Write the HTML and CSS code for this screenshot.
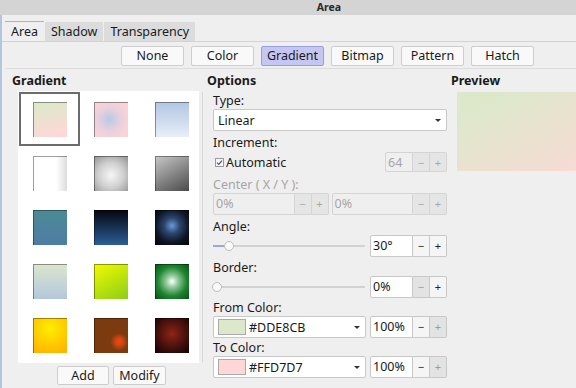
FILE: index.html
```html
<!DOCTYPE html>
<html lang="en">
<head>
  <meta charset="UTF-8">
  <meta name="viewport" content="width=device-width, initial-scale=1.0">
  <title>Area</title>
  <link rel="stylesheet" href="styles.css">
</head>
<body>
  <div class="titlebar">Area</div>

  <div class="window">
    <!-- Tabs -->
    <div class="tabs">
      <span class="tab active">Area</span>
      <span class="tab">Shadow</span>
      <span class="tab">Transparency</span>
    </div>

    <!-- Fill type buttons -->
    <div class="fill-types">
      <button class="btn">None</button>
      <button class="btn">Color</button>
      <button class="btn selected">Gradient</button>
      <button class="btn">Bitmap</button>
      <button class="btn">Pattern</button>
      <button class="btn">Hatch</button>
    </div>

    <div class="content">
      <!-- Gradient gallery -->
      <div class="gradient-col">
        <h3>Gradient</h3>
        <div class="gallery">
          <div class="cell selected"><div class="swatch g-pastel"></div></div>
          <div class="cell"><div class="swatch g-dream"></div></div>
          <div class="cell"><div class="swatch g-sky"></div></div>
          <div class="cell"><div class="swatch g-white"></div></div>
          <div class="cell"><div class="swatch g-silver"></div></div>
          <div class="cell"><div class="swatch g-gray"></div></div>
          <div class="cell"><div class="swatch g-teal"></div></div>
          <div class="cell"><div class="swatch g-midnight"></div></div>
          <div class="cell"><div class="swatch g-deepsea"></div></div>
          <div class="cell"><div class="swatch g-mist"></div></div>
          <div class="cell"><div class="swatch g-lime"></div></div>
          <div class="cell"><div class="swatch g-green"></div></div>
          <div class="cell"><div class="swatch g-sun"></div></div>
          <div class="cell"><div class="swatch g-brown"></div></div>
          <div class="cell"><div class="swatch g-wine"></div></div>
        </div>
        <div class="gallery-actions">
          <button class="btn small">Add</button>
          <button class="btn small">Modify</button>
        </div>
      </div>

      <!-- Options -->
      <div class="options-col">
        <h3>Options</h3>
        <div class="options">
          <label class="first">Type:</label>
          <div class="select">
            <span>Linear</span>
            <span class="arrow"></span>
          </div>

          <label>Increment:</label>
          <div class="row spread">
            <span class="check">
              <svg width="9" height="9" viewBox="0 0 9 9">
                <rect x="0.5" y="0.5" width="8" height="8" fill="#f6f6f6" stroke="#9a9a9a"/>
                <path d="M2 4.6 L3.8 6.4 L7 2.6" fill="none" stroke="#4b5873" stroke-width="1.2"/>
              </svg>
              Automatic
            </span>
            <div class="spin disabled inc">
              <span class="spin-field">64</span>
              <span class="spin-btn">−</span>
              <span class="spin-btn">+</span>
            </div>
          </div>

          <label class="muted">Center ( X / Y ):</label>
          <div class="row pair">
            <div class="spin disabled">
              <span class="spin-field">0%</span>
              <span class="spin-btn">−</span>
              <span class="spin-btn">+</span>
            </div>
            <div class="spin disabled">
              <span class="spin-field">0%</span>
              <span class="spin-btn">−</span>
              <span class="spin-btn">+</span>
            </div>
          </div>

          <label>Angle:</label>
          <div class="row">
            <div class="slider">
              <div class="slider-track"></div>
              <div class="slider-fill"></div>
              <div class="slider-handle angle"></div>
            </div>
            <div class="spin fixed">
              <span class="spin-field">30°</span>
              <span class="spin-btn">−</span>
              <span class="spin-btn">+</span>
            </div>
          </div>

          <label class="tight">Border:</label>
          <div class="row">
            <div class="slider">
              <div class="slider-track"></div>
              <div class="slider-handle"></div>
            </div>
            <div class="spin fixed">
              <span class="spin-field">0%</span>
              <span class="spin-btn off">−</span>
              <span class="spin-btn">+</span>
            </div>
          </div>

          <label class="tighter">From Color:</label>
          <div class="row">
            <div class="select color">
              <span class="color-name"><span class="chip from"></span>#DDE8CB</span>
              <span class="arrow"></span>
            </div>
            <div class="spin fixed">
              <span class="spin-field">100%</span>
              <span class="spin-btn">−</span>
              <span class="spin-btn off">+</span>
            </div>
          </div>

          <label class="tighter">To Color:</label>
          <div class="row">
            <div class="select color">
              <span class="color-name"><span class="chip to"></span>#FFD7D7</span>
              <span class="arrow"></span>
            </div>
            <div class="spin fixed">
              <span class="spin-field">100%</span>
              <span class="spin-btn">−</span>
              <span class="spin-btn off">+</span>
            </div>
          </div>
        </div>
      </div>

      <!-- Preview -->
      <div class="preview-col">
        <h3>Preview</h3>
        <div class="preview"></div>
      </div>
    </div>
  </div>
</body>
</html>
```

FILE: styles.css
```css
:root {
  --panel-bg: #efefef;
  --text: #1a1a1a;
  --muted: #a6a6a6;
  --field-border: #c8c8c8;
  --line: #d8d8d8;
}

* {
  box-sizing: border-box;
}

body {
  margin: 0;
  width: 576px;
  height: 388px;
  overflow: hidden;
  background-color: var(--panel-bg);
  color: var(--text);
  font-family: "Noto Sans", sans-serif;
  font-size: 12.5px;
}

.titlebar {
  height: 15px;
  line-height: 15px;
  padding-left: 82px;
  background-color: #d4d4d4;
  color: #2a2a2a;
  font-size: 10.5px;
  font-weight: bold;
  text-align: center;
}

.window {
  height: 373px;
  padding-top: 6px;
  border-left: 2px solid #b3c6de;
}

/* Tabs */
.tabs {
  display: flex;
  align-items: flex-end;
  gap: 1px;
  height: 21px;
  padding-left: 3px;
  border-bottom: 1px solid #d2d2d2;
}

.tab {
  height: 19px;
  line-height: 19px;
  padding: 0 6px;
  background-color: #dcdcdc;
}

.tab.active {
  height: 20px;
  background-color: var(--panel-bg);
  border-top: 1px solid #ababdf;
}

/* Buttons */
.btn {
  width: 63px;
  height: 20px;
  padding: 0;
  font: inherit;
  line-height: 18px;
  color: var(--text);
  background-color: #f9f9f9;
  border: 1px solid #cdcdcd;
  border-radius: 2px;
}

.btn.selected {
  background-color: #c6c6f2;
  border-color: #9c9ce0;
}

.btn.small {
  width: 52px;
  height: 19px;
  line-height: 17px;
}

.btn.small + .btn.small {
  width: 53px;
}

.fill-types {
  display: flex;
  gap: 7px;
  padding-left: 119px;
  margin-top: 4px;
}

/* Layout */
.content {
  display: flex;
  margin: 2px 0 0 3px;
  border-top: 1px solid #dcdcdc;
}

h3 {
  margin: 4px 0 0;
  font-size: 12.5px;
  line-height: 16px;
  font-weight: bold;
}

.gradient-col {
  flex: 0 0 197px;
}

.gradient-col h3 {
  padding-left: 7px;
}

.gallery {
  display: grid;
  grid-template-columns: repeat(3, 61px);
  grid-auto-rows: 54px;
  width: 181px;
  height: 272px;
  margin: 2px 0 0 13px;
  padding: 1px 0 0 1px;
  overflow: hidden;
  background-color: #fff;
}

.cell {
  padding-top: 10px;
}

.cell.selected {
  box-shadow: inset 0 0 0 2px #6c6c6c;
}

.swatch {
  width: 34px;
  height: 35px;
  margin: 0 auto;
  box-shadow: inset 1px 1px 0 rgba(0, 0, 0, 0.38);
}

.g-pastel { background: linear-gradient(165deg, #dde8cb 10%, #ffd7d7 95%); }
.g-dream { background: radial-gradient(circle at 45% 50%, #b9c9e6 0, #e8d0dc 45%, #f8d3d8 75%); }
.g-sky { background: linear-gradient(180deg, #b2c6e3, #e7eef6); }
.g-white { background: linear-gradient(90deg, #fff 68%, #dcdcdc); }
.g-silver { background: radial-gradient(circle at 50% 55%, #f6f6f6 0, #cfcfcf 50%, #9c9c9c 90%); }
.g-gray { background: linear-gradient(150deg, #c8c8c8, #4a4a4a); }
.g-teal { background: linear-gradient(180deg, #4b8b94, #4f7ca6); }
.g-midnight { background: linear-gradient(180deg, #04070f, #2b5e97); }
.g-deepsea { background: radial-gradient(circle at 50% 45%, #6b9ad6 0, #2c4670 30%, #0f1624 65%, #05070a 95%); }
.g-mist { background: linear-gradient(180deg, #dce6cd, #b3c7dc); }
.g-lime { background: linear-gradient(150deg, #f2fb00, #8ccd17); }
.g-green { background: radial-gradient(circle at 50% 50%, #ffffff 0, #8fc99a 25%, #1f8530 60%, #0d5e1c 90%); }
.g-sun { background: radial-gradient(circle at 50% 30%, #ffee00 0, #ffd000 45%, #ffb400 90%); }
.g-brown { background: radial-gradient(circle at 74% 68%, #ff3c10 0, #d84812 3px, #7c3a0f 9px); }
.g-wine { background: radial-gradient(circle at 50% 45%, #8e2418 0, #5a160e 40%, #200606 85%); }

.gallery-actions {
  display: flex;
  gap: 4px;
  margin: 3px 0 0 52px;
}

/* Options */
.options-col {
  flex: 0 0 247px;
}

.options-col h3 {
  margin-left: 5px;
}

.options {
  height: 270px;
  margin-top: 3px;
  padding: 0 2px 0 10px;
  border-left: 1px solid var(--line);
}

.options label {
  display: block;
  height: 17px;
  line-height: 17px;
  margin-top: 3px;
}

.options label.first {
  margin-top: 0;
}

.options label.tight {
  margin-top: 2px;
}

.options label.tighter {
  margin-top: 1px;
}

.options label.muted {
  color: var(--muted);
}

.select {
  display: flex;
  align-items: center;
  justify-content: space-between;
  height: 22px;
  padding: 0 5px 0 4px;
  background-color: #fff;
  border: 1px solid var(--field-border);
  border-radius: 2px;
}

.select.color {
  flex: 0 0 153px;
  margin-right: 4px;
}

.arrow {
  width: 0;
  height: 0;
  border-left: 3px solid transparent;
  border-right: 3px solid transparent;
  border-top: 3px solid #333;
}

.color-name {
  display: flex;
  align-items: center;
}

.chip {
  width: 28px;
  height: 16px;
  margin-right: 3px;
  border: 1px solid #aaa;
}

.chip.from { background-color: #dde8cb; }
.chip.to { background-color: #ffd7d7; }

.row {
  display: flex;
  align-items: center;
  height: 22px;
}

.row.spread {
  justify-content: space-between;
}

.row.pair {
  gap: 3px;
}

.row.pair .spin {
  flex: 1;
}

.check {
  display: flex;
  align-items: center;
  gap: 2px;
  padding-left: 2px;
}

/* Spin fields */
.spin {
  display: flex;
  height: 22px;
}

.spin.fixed {
  flex: 0 0 77px;
}

.spin.inc {
  flex: 0 0 62px;
  height: 20px;
}

.spin-field {
  flex: 1;
  padding-left: 2px;
  line-height: 20px;
  background-color: #fff;
  border: 1px solid var(--field-border);
  border-radius: 2px 0 0 2px;
}

.spin-btn {
  width: 17px;
  line-height: 19px;
  font-size: 11px;
  text-align: center;
  color: #222;
  background-color: #f5f5f5;
  border: 1px solid var(--field-border);
  border-left: none;
}

.spin-btn:last-child {
  border-radius: 0 2px 2px 0;
}

.spin-btn.off {
  background-color: #e3e3e3;
  color: #9a9a9a;
}

.spin.disabled .spin-field {
  color: var(--muted);
  background-color: var(--panel-bg);
  border-color: #d4d4d4;
}

.spin.disabled .spin-btn {
  color: #a8a8a8;
  background-color: #e5e5e5;
  border-color: #d4d4d4;
}

/* Sliders */
.slider {
  position: relative;
  flex: 1;
  height: 22px;
  margin-right: 5px;
}

.slider-track {
  position: absolute;
  left: 0;
  right: 0;
  top: 10px;
  height: 2px;
  background-color: #d2d2d2;
}

.slider-fill {
  position: absolute;
  left: 0;
  top: 10px;
  width: 16px;
  height: 2px;
  background-color: #a2a2e6;
}

.slider-handle {
  position: absolute;
  top: 6px;
  left: -1px;
  width: 10px;
  height: 10px;
  border-radius: 50%;
  background-color: #fafafa;
  border: 1px solid #bdbdbd;
}

.slider-handle.angle {
  left: 11px;
}

/* Preview */
.preview-col {
  flex: 1;
  min-width: 0;
  overflow: hidden;
}

.preview-col h3 {
  margin-left: 2px;
}

.preview {
  width: 200px;
  height: 79px;
  margin: 3px 0 0 8px;
  background: linear-gradient(152deg, #dde8cb 15%, #ffd7d7 95%);
}
```
